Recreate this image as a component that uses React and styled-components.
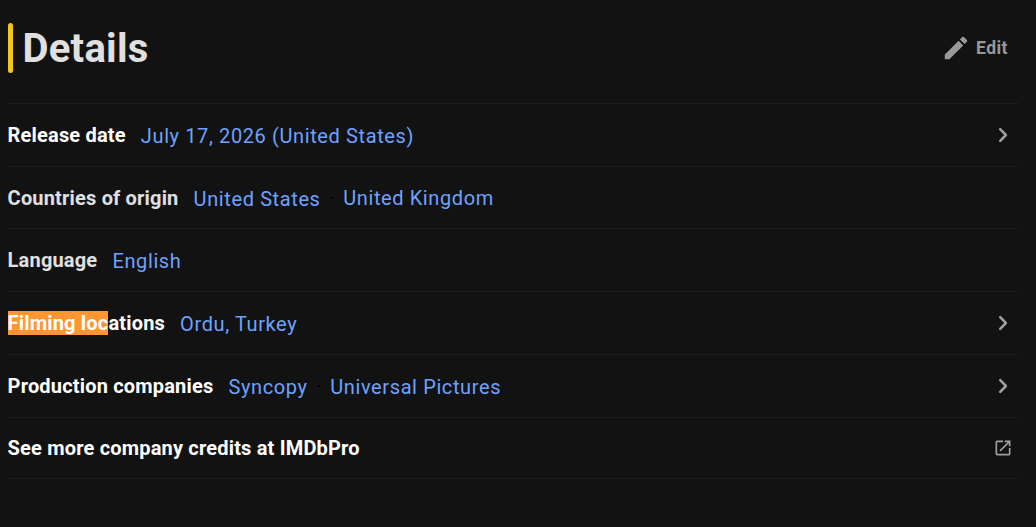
import React from 'react';
import styled, { createGlobalStyle } from 'styled-components';

const GlobalStyle = createGlobalStyle`
  body {
    margin: 0;
    background: #121212;
    font-family: Roboto, 'Liberation Sans', sans-serif;
  }
`;

const Section = styled.section`
  box-sizing: border-box;
  height: 527px;
  padding: 23px 18px 0 8px;
`;

const Header = styled.header`
  display: flex;
  justify-content: space-between;
  height: 80px;
`;

const Title = styled.h2`
  display: flex;
  align-items: center;
  gap: 9.5px;
  height: 51px;
  margin: 0;
  color: #e0e0e0;
  font-size: 40px;
  font-weight: 700;
  letter-spacing: 0.25px;
  line-height: 51px;

  &::before {
    content: '';
    align-self: flex-start;
    width: 5px;
    height: 50px;
    border-radius: 5px;
    background: #f5c518;
  }
`;

const EditButton = styled.button`
  display: flex;
  align-items: center;
  gap: 5px;
  height: 50px;
  padding: 0 10px 0 0;
  border: 0;
  background: none;
  color: #999999;
  font: 700 17.5px Roboto, sans-serif;
  letter-spacing: 0.45px;
  cursor: pointer;
`;

const List = styled.ul`
  margin: 0;
  padding: 0;
  list-style: none;
`;

const Row = styled.li`
  display: flex;
  align-items: center;
  box-sizing: border-box;
  height: 62.73px;
  border-top: 1px solid #1e1e1e;
  font-size: 20px;
  line-height: 24px;

  &:last-child {
    height: 62.35px;
    border-bottom: 1px solid #1e1e1e;
  }
`;

const Label = styled.span`
  margin-right: 15.1px;
  margin-left: -0.4px;
  color: ${props => (props.$muted ? '#e0e0e0' : '#ffffff')};
  font-weight: 700;
  letter-spacing: 0.18px;
`;

const Mark = styled.span`
  background: #ff9632;
`;

const Value = styled.a`
  padding-top: ${props => (props.$first ? 2 : 1.7)}px;
  color: #6ea2ff;
  letter-spacing: 0.61px;
  cursor: pointer;
`;

const Separator = styled.span`
  margin: 0 8.7px;
  color: #000000;
`;

const RowIcon = styled.svg`
  width: 20px;
  height: 20px;
  margin-left: auto;
  margin-right: 5px;
  fill: #a0a0a0;
`;

const rows = [
  { label: 'Release date', values: ['July 17, 2026 (United States)'], icon: 'chevron' },
  { label: 'Countries of origin', values: ['United States', 'United Kingdom'], muted: true },
  { label: 'Language', values: ['English'], muted: true },
  { label: 'ations', marked: 'Filming loc', values: ['Ordu, Turkey'], icon: 'chevron' },
  { label: 'Production companies', values: ['Syncopy', 'Universal Pictures'], icon: 'chevron' },
  { label: 'See more company credits at IMDbPro', values: [], icon: 'launch' },
];

function Icon({ name }) {
  if (name === 'launch') {
    return (
      <RowIcon viewBox="0 0 24 24">
        <path d="M19 19H5V5h7V3H5a2 2 0 0 0-2 2v14a2 2 0 0 0 2 2h14a2 2 0 0 0 2-2v-7h-2v7zM14 3v2h3.59l-9.83 9.83 1.41 1.41L19 6.41V10h2V3h-7z" />
      </RowIcon>
    );
  }
  return (
    <RowIcon viewBox="0 0 20 20">
      <path
        d="M7.2 4.2 12.9 10l-5.7 5.8"
        fill="none"
        stroke="#a0a0a0"
        strokeWidth="2.5"
        strokeLinecap="round"
        strokeLinejoin="round"
      />
    </RowIcon>
  );
}

function App() {
  return (
    <Section>
      <GlobalStyle />
      <Header>
        <Title>Details</Title>
        <EditButton>
          <svg width="30" height="30" viewBox="0 0 24 24" fill="currentColor">
            <path d="M3 17.46v3.04c0 .28.22.5.5.5h3.04c.13 0 .26-.05.35-.15L17.81 9.94l-3.75-3.75L3.15 17.1c-.1.1-.15.22-.15.36zM20.71 7.04a1 1 0 0 0 0-1.41l-2.34-2.34a1 1 0 0 0-1.41 0l-1.83 1.83 3.75 3.75 1.83-1.83z" />
          </svg>
          Edit
        </EditButton>
      </Header>
      <List>
        {rows.map(row => (
          <Row key={row.label}>
            <Label $muted={row.muted}>
              {row.marked && <Mark>{row.marked}</Mark>}
              {row.label}
            </Label>
            {row.values.map((value, index) => (
              <React.Fragment key={value}>
                {index > 0 && <Separator>·</Separator>}
                <Value $first={index === 0}>{value}</Value>
              </React.Fragment>
            ))}
            {row.icon && <Icon name={row.icon} />}
          </Row>
        ))}
      </List>
    </Section>
  );
}

export default App;
